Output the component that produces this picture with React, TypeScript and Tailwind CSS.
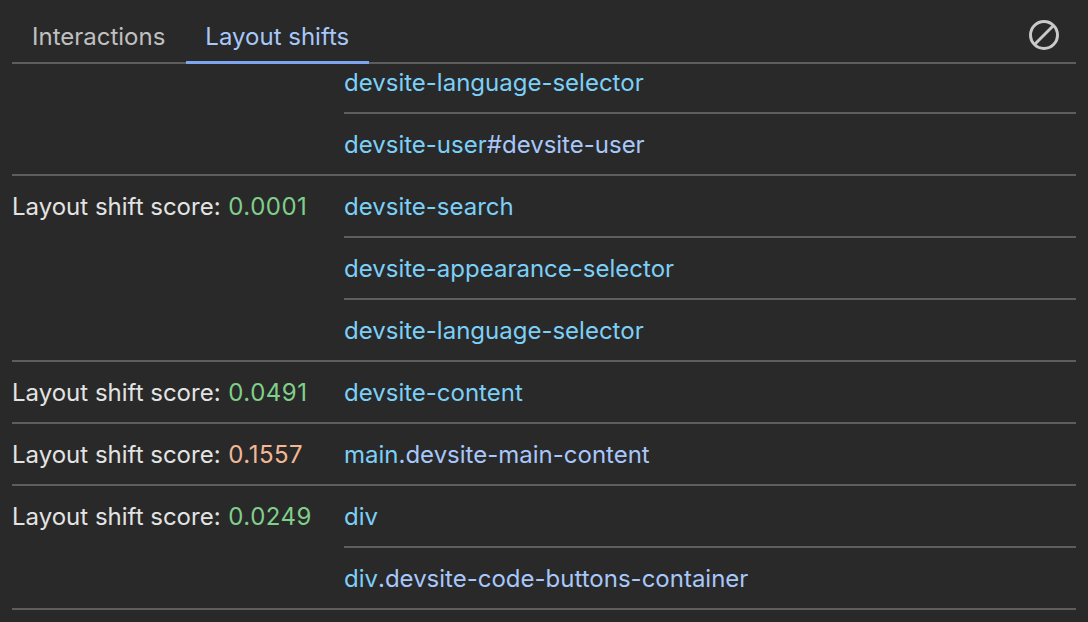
type Row = { score?: string; color?: string; nodes: { tag: string; rest?: string }[] };

const rows: Row[] = [
  {
    nodes: [
      { tag: "devsite-language-selector" },
      { tag: "devsite-user", rest: "#devsite-user" },
    ],
  },
  {
    score: "0.0001",
    color: "text-[#7fcf8b]",
    nodes: [
      { tag: "devsite-search" },
      { tag: "devsite-appearance-selector" },
      { tag: "devsite-language-selector" },
    ],
  },
  { score: "0.0491", color: "text-[#7fcf8b]", nodes: [{ tag: "devsite-content" }] },
  {
    score: "0.1557",
    color: "text-[#f3b795]",
    nodes: [{ tag: "main", rest: ".devsite-main-content" }],
  },
  {
    score: "0.0249",
    color: "text-[#7fcf8b]",
    nodes: [{ tag: "div" }, { tag: "div", rest: ".devsite-code-buttons-container" }],
  },
];

export default function App() {
  return (
    <div className="w-[1088px] h-[622px] overflow-hidden bg-[#292929] px-3 font-['Inter','Liberation_Sans',sans-serif] text-[24px]">
      {/* Tabs */}
      <div className="flex h-16 items-stretch justify-between border-b-2 border-[#5e5e5e] pt-3">
        <div className="flex">
          <div className="flex items-center px-5 text-[#c0c0c0]">Interactions</div>
          <div className="-mb-0.5 ml-px flex items-center border-b-[3px] border-[#7ea6f0] pl-[19px] pr-5 text-[#a8c7fa]">
            Layout shifts
          </div>
        </div>
        <div className="flex items-center pb-1 pr-4 text-[#c9c9c9]">
          <svg width="32" height="32" viewBox="0 0 32 32" fill="none" stroke="currentColor" strokeWidth="3">
            <circle cx="16" cy="16" r="13.5" />
            <path d="M6.5 25.5 25.5 6.5" />
          </svg>
        </div>
      </div>

      {/* Rows, scrolled a little past the top of the list */}
      <div className="h-[558px] overflow-hidden">
        <div className="-mt-3">
          {rows.map((row, i) => (
            <div key={i} className="flex border-b-2 border-[#5e5e5e]">
              <div className="w-[332px] shrink-0 text-[#e3e3e3]">
                {row.score && (
                  <div className="flex h-[60px] items-center pt-px">
                    Layout shift score:&nbsp;
                    <span className={`ml-px tracking-[0.5px] ${row.color}`}>{row.score}</span>
                  </div>
                )}
              </div>
              <div className="flex-1">
                {row.nodes.map((node, j) => (
                  <div
                    key={j}
                    className={
                      j < row.nodes.length - 1
                        ? "flex h-[62px] items-center border-b-2 border-[#5e5e5e] pt-px"
                        : "flex h-[60px] items-center pt-px"
                    }
                  >
                    <span className="text-[#7cd0f8]">{node.tag}</span>
                    {node.rest && <span className="text-[#a8c7fa]">{node.rest}</span>}
                  </div>
                ))}
              </div>
            </div>
          ))}
        </div>
      </div>
    </div>
  );
}
